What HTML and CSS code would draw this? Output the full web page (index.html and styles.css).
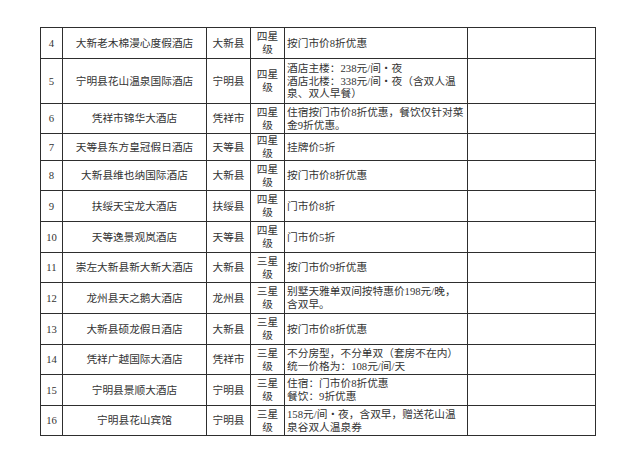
FILE: index.html
```html
<!DOCTYPE html>
<html lang="zh-CN">
<head>
<meta charset="utf-8">
<title>酒店优惠</title>
<link rel="stylesheet" href="styles.css">
</head>
<body>
<div class="page">
<table class="grid">
<colgroup>
<col class="c-no"><col class="c-name"><col class="c-area"><col class="c-star"><col class="c-offer"><col class="c-note">
</colgroup>
<tbody>
<tr class="h31"><td class="no">4</td><td class="name">大新老木棉漫心度假酒店</td><td class="area">大新县</td><td class="star">四星<br>级</td><td class="offer">按门市价8折优惠</td><td></td></tr>
<tr class="h45"><td class="no">5</td><td class="name">宁明县花山温泉国际酒店</td><td class="area">宁明县</td><td class="star">四星<br>级</td><td class="offer">酒店主楼：238元/间・夜<br>酒店北楼：338元/间・夜（含双人温<br>泉、双人早餐）</td><td></td></tr>
<tr class="h30"><td class="no">6</td><td class="name">凭祥市锦华大酒店</td><td class="area">凭祥市</td><td class="star">四星<br>级</td><td class="offer">住宿按门市价8折优惠，餐饮仅针对菜<br>金9折优惠。</td><td></td></tr>
<tr class="h27"><td class="no">7</td><td class="name">天等县东方皇冠假日酒店</td><td class="area">天等县</td><td class="star">四星<br>级</td><td class="offer">挂牌价5折</td><td></td></tr>
<tr class="h30"><td class="no">8</td><td class="name">大新县维也纳国际酒店</td><td class="area">大新县</td><td class="star">四星<br>级</td><td class="offer">按门市价8折优惠</td><td></td></tr>
<tr class="h31"><td class="no">9</td><td class="name">扶绥天宝龙大酒店</td><td class="area">扶绥县</td><td class="star">四星<br>级</td><td class="offer">门市价8折</td><td></td></tr>
<tr class="h31"><td class="no">10</td><td class="name">天等逸景观岚酒店</td><td class="area">天等县</td><td class="star">四星<br>级</td><td class="offer">门市价5折</td><td></td></tr>
<tr class="h30"><td class="no">11</td><td class="name">崇左大新县新大新大酒店</td><td class="area">大新县</td><td class="star">三星<br>级</td><td class="offer">按门市价9折优惠</td><td></td></tr>
<tr class="h31"><td class="no">12</td><td class="name">龙州县天之鹅大酒店</td><td class="area">龙州县</td><td class="star">三星<br>级</td><td class="offer">别墅天雅单双间按特惠价198元/晚，<br>含双早。</td><td></td></tr>
<tr class="h31"><td class="no">13</td><td class="name">大新县硕龙假日酒店</td><td class="area">大新县</td><td class="star">三星<br>级</td><td class="offer">按门市价8折优惠</td><td></td></tr>
<tr class="h30"><td class="no">14</td><td class="name">凭祥广越国际大酒店</td><td class="area">凭祥市</td><td class="star">三星<br>级</td><td class="offer">不分房型，不分单双（套房不在内）<br>统一价格为：108元/间/天</td><td></td></tr>
<tr class="h31"><td class="no">15</td><td class="name">宁明县景顺大酒店</td><td class="area">宁明县</td><td class="star">三星<br>级</td><td class="offer">住宿：门市价8折优惠<br>餐饮：9折优惠</td><td></td></tr>
<tr class="h30"><td class="no">16</td><td class="name">宁明县花山宾馆</td><td class="area">宁明县</td><td class="star">三星<br>级</td><td class="offer">158元/间・夜，含双早，赠送花山温<br>泉谷双人温泉券</td><td></td></tr>
</tbody>
</table>
</div>
</body>
</html>
```
FILE: styles.css
```css
html, body {
  margin: 0;
  padding: 0;
  background: #ffffff;
}
.page {
  padding: 27px 0 0 40px;
}
.grid {
  border-collapse: collapse;
  table-layout: fixed;
  width: 555px;
  font-family: "Liberation Serif", "Noto Sans CJK SC", serif;
  font-size: 10.7px;
  color: #333333;
}
.c-no { width: 22px; }
.c-name { width: 144px; }
.c-area { width: 44px; }
.c-star { width: 34px; }
.c-offer { width: 183px; }
.c-note { width: 128px; }
.grid td {
  border: 1px solid #2e2e2e;
  padding: 0;
  vertical-align: middle;
  line-height: 12.8px;
  overflow: visible;
  white-space: nowrap;
}
.h27 td { height: 26px; }
.h30 td { height: 29px; }
.h31 td { height: 30px; }
.h45 td { height: 44px; }
.no, .name, .area, .star {
  text-align: center;
}
.star {
  line-height: 13px;
}
.offer {
  text-align: left;
  padding-left: 2px !important;
}
```
